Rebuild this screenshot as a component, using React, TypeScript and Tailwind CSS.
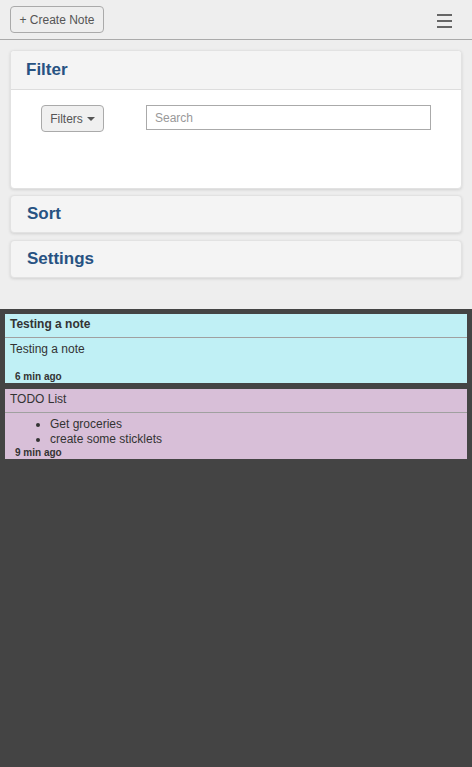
import React from "react";

export default function App() {
  const font = { fontFamily: '"Liberation Sans", Arial, sans-serif' };
  return (
    <div className="min-h-[767px] flex flex-col bg-[#444444]" style={font}>
      <div className="bg-[#eeeeee] pb-[31px]">
        <div className="h-[40px] border-b border-[#aaaaaa] flex items-start justify-between pl-[10px] pr-[20px]">
          <button className="mt-[6px] h-[27px] w-[94px] rounded-[4px] border border-[#aaaaaa] bg-[#eeeeee] text-[12px] text-[#555555] flex items-center justify-center">
            + Create Note
          </button>
          <div className="mt-[14px] w-[15px] flex flex-col gap-[4px]">
            <div className="h-[2px] bg-[#666666]" />
            <div className="h-[2px] bg-[#666666]" />
            <div className="h-[2px] bg-[#666666]" />
          </div>
        </div>

        <div className="mx-[10px] mt-[10px] flex flex-col">
          <div className="rounded-[4px] border border-[#e2e2e2] bg-white shadow-[0_1px_3px_rgba(0,0,0,0.12)]">
            <div className="h-[39px] bg-[#f4f4f4] border-b border-[#dddddd] rounded-t-[4px] flex items-center pl-[15px]">
              <span className="text-[17px] font-bold text-[#275282]">Filter</span>
            </div>
            <div className="h-[98px] pt-[15px] flex items-start">
              <button className="ml-[30px] h-[27px] w-[63px] rounded-[4px] border border-[#aaaaaa] bg-[#f0f0f0] text-[12px] text-[#555555] flex items-center justify-center gap-[4px]">
                Filters
                <span className="inline-block w-0 h-0 border-l-[4px] border-r-[4px] border-t-[4px] border-l-transparent border-r-transparent border-t-[#555555] mt-[1px]" />
              </button>
              <div className="ml-[42px] h-[25px] w-[285px] border border-[#aaaaaa] bg-white flex items-center pl-[8px]">
                <span className="text-[12px] text-[#999999]">Search</span>
              </div>
            </div>
          </div>

          <div className="mt-[6px] rounded-[4px] border border-[#e2e2e2] bg-[#f4f4f4] shadow-[0_1px_3px_rgba(0,0,0,0.12)] h-[38px] flex items-center pl-[16px]">
            <span className="text-[17px] font-bold text-[#275282]">Sort</span>
          </div>
          <div className="mt-[7px] rounded-[4px] border border-[#e2e2e2] bg-[#f4f4f4] shadow-[0_1px_3px_rgba(0,0,0,0.12)] h-[38px] flex items-center pl-[16px]">
            <span className="text-[17px] font-bold text-[#275282]">Settings</span>
          </div>
        </div>
      </div>

      <div className="px-[5px] pt-[5px] flex flex-col gap-[6px] text-[#333333]">
        <div className="bg-[#c0f0f5] h-[69px] flex flex-col">
          <div className="h-[24px] border-b border-[#a0a0a0] pl-[5px] pt-[3px]">
            <span className="block text-[12px] font-bold leading-[14px]">Testing a note</span>
          </div>
          <div className="pl-[5px] pt-[4px] text-[12px] leading-[14px]">Testing a note</div>
          <div className="mt-auto pl-[10px] text-[10px] font-bold leading-[12px]">6 min ago</div>
        </div>
        <div className="bg-[#d8bfd8] h-[70px] flex flex-col">
          <div className="h-[24px] border-b border-[#a0a0a0] pl-[5px] pt-[3px]">
            <span className="block text-[12px] leading-[14px]">TODO List</span>
          </div>
          <ul className="pl-[45px] pt-[4px] text-[12px] leading-[15px] list-disc">
            <li>Get groceries</li>
            <li>create some sticklets</li>
          </ul>
          <div className="mt-auto pl-[10px] text-[10px] font-bold leading-[12px]">9 min ago</div>
        </div>
      </div>
    </div>
  );
}
